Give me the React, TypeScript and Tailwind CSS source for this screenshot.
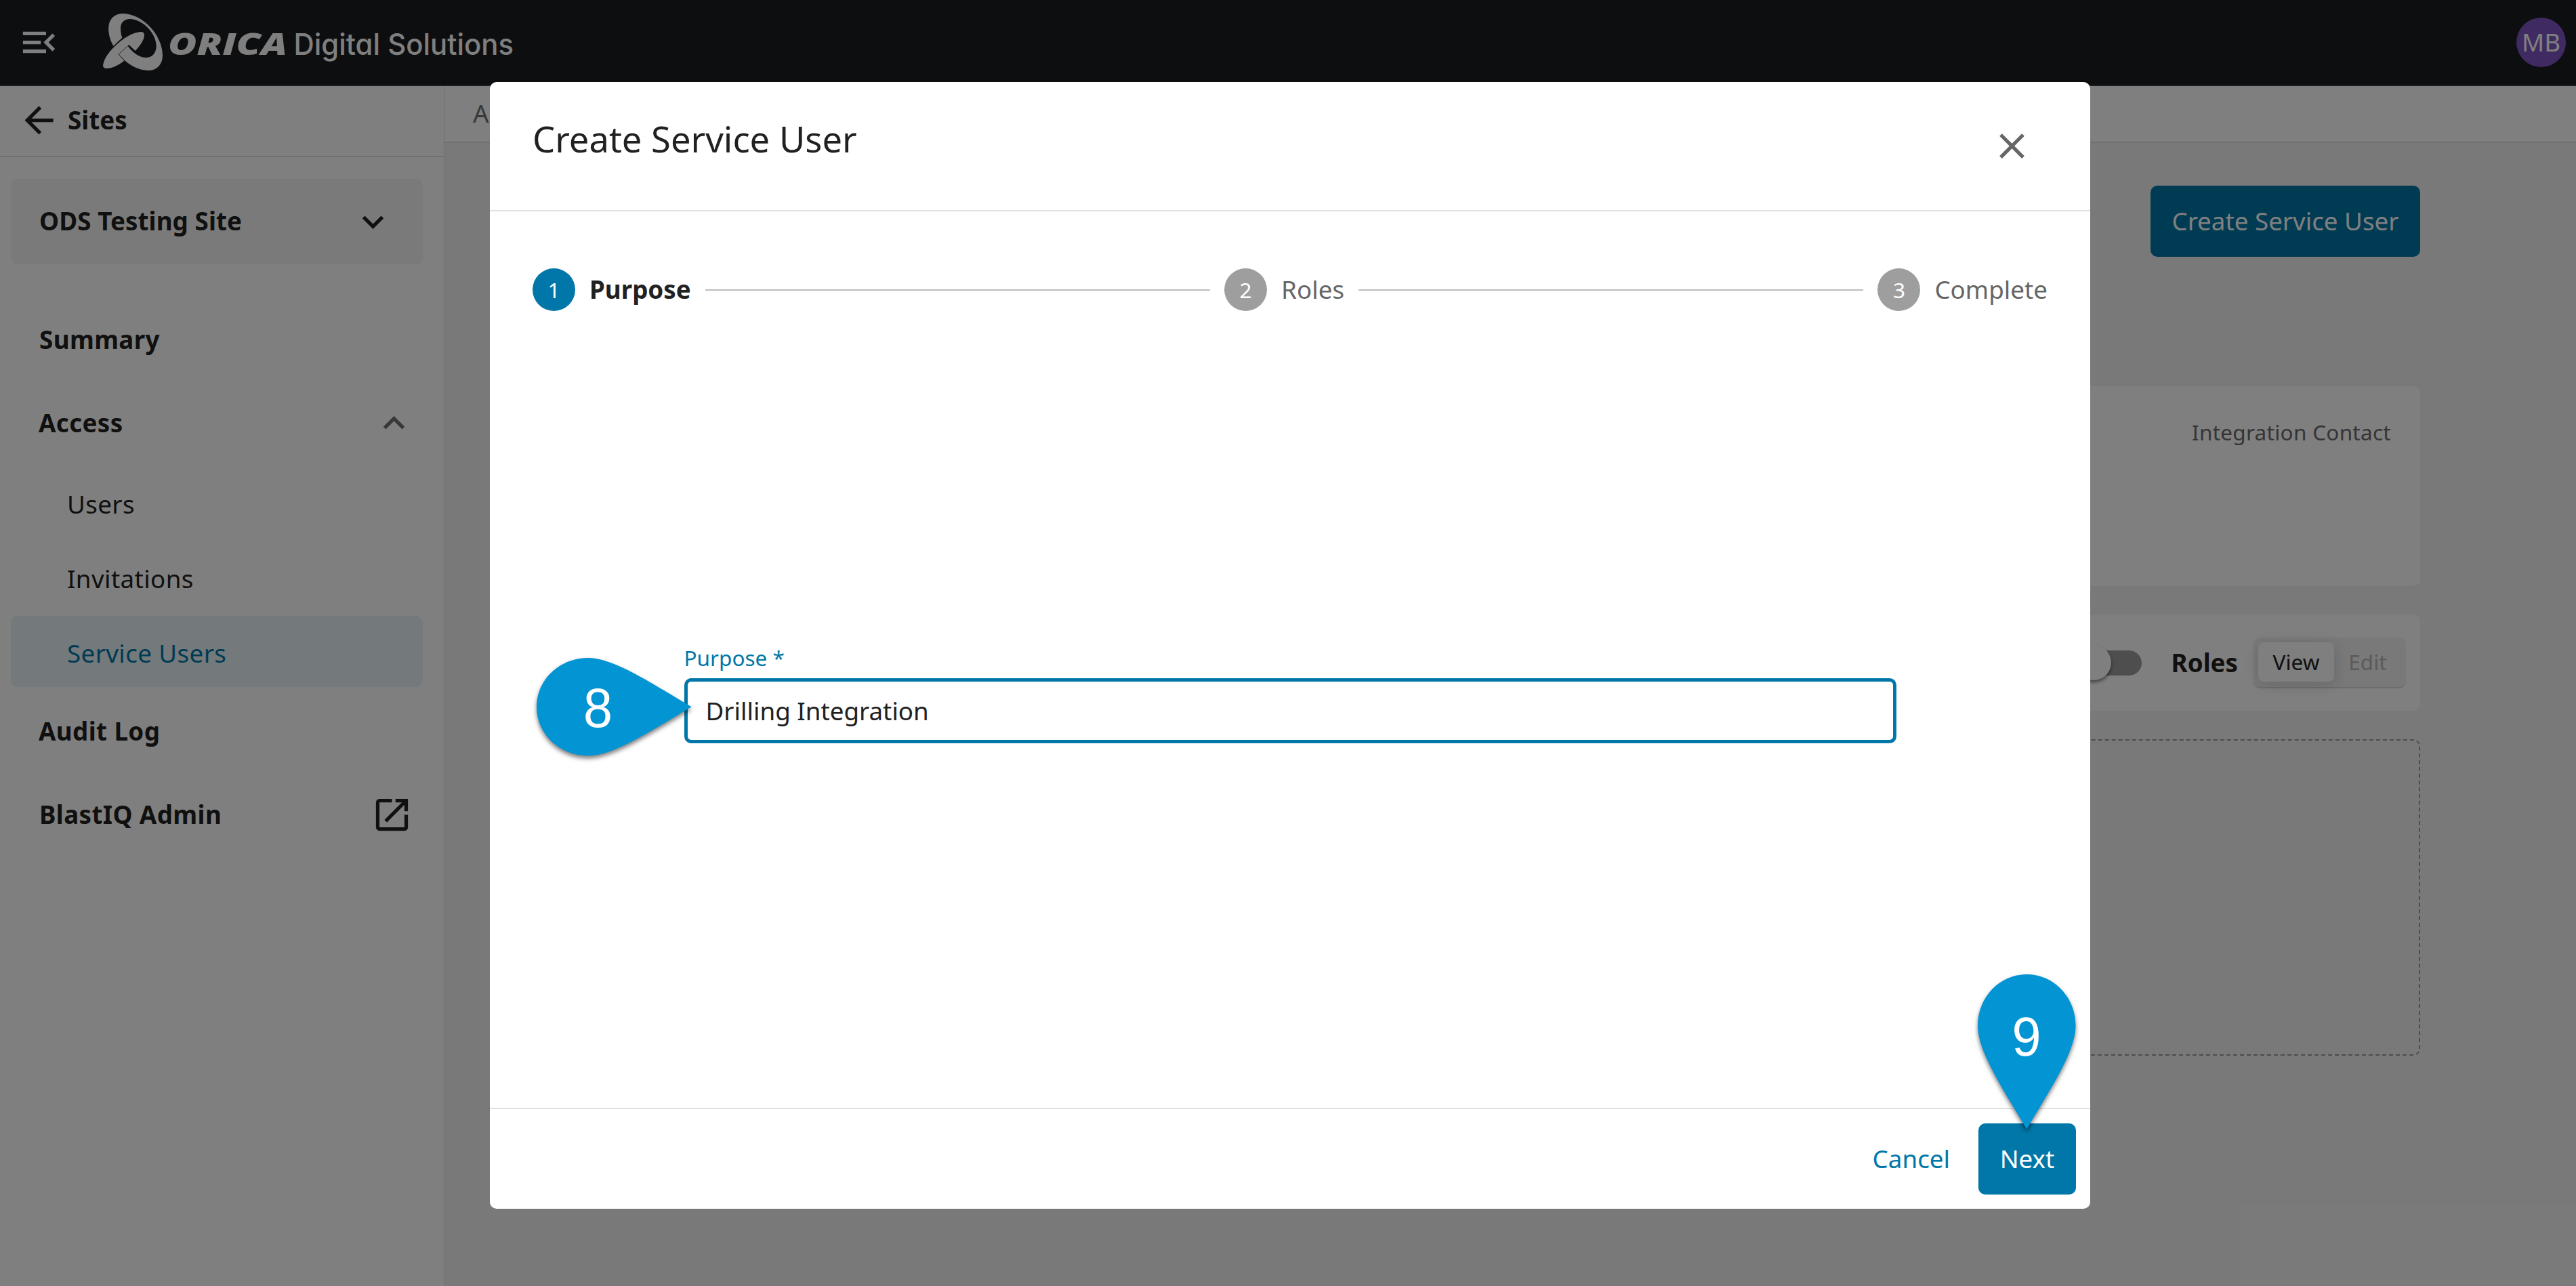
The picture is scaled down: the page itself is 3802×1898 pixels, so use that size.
import React from 'react';
import { MdArrowBack, MdClose, MdExpandLess, MdExpandMore, MdMenuOpen, MdOpenInNew } from 'react-icons/md';

const steps = [
  { id: 1, label: 'Purpose', active: true },
  { id: 2, label: 'Roles', active: false },
  { id: 3, label: 'Complete', active: false },
];

const accessItems = [
  { label: 'Users', selected: false },
  { label: 'Invitations', selected: false },
  { label: 'Service Users', selected: true },
];

const Logo: React.FC = () => (
  <svg width="640" height="110" viewBox="0 0 640 110" fill="#fff" className="shrink-0">
    <g transform="scale(0.33333)">
      <path d="M82 174C66 146 59 115 61 88C64 50 90 30 125 30C215 32 300 128 300 215C299 256 275 282 235 282C195 281 160 262 131 237L106 210L146 174C171 207 200 225 228 225C258 224 273 200 272 170C269 112 208 55 155 54C128 54 112 74 114 98C114 112 117 125 121 137Z" />
      <path d="M202 111C214 110 220 117 219 128C217 147 200 174 179 195L151 169L104 210L130 239C106 258 76 273 52 273C40 272 34 266 37 254C42 228 62 200 87 176C122 141 168 113 202 111Z" />
      <path d="M131 237L105 210L147 173" fill="none" stroke="#1a1c20" strokeWidth="1" />
    </g>
    <text
      x="108"
      y="71"
      fontSize="45"
      textLength="176"
      lengthAdjust="spacingAndGlyphs"
      className="font-['Open_Sans',sans-serif] font-extrabold italic"
    >
      ORICA
    </text>
    <text
      x="293.5"
      y="71"
      fontSize="43.5"
      textLength="324.5"
      lengthAdjust="spacingAndGlyphs"
      className="font-['Inter',sans-serif] font-medium [font-feature-settings:'cv11']"
    >
      Digital Solutions
    </text>
  </svg>
);

const Header: React.FC = () => (
  <header className="flex h-[127px] shrink-0 items-center border-b-2 border-[#38383c] bg-[#1a1c20] pl-[26px] pr-[15px] text-white">
    <MdMenuOpen className="size-[63px]" />
    <div className="ml-[51px] h-[105px]">
      <Logo />
    </div>
    <div className="ml-auto flex size-[73px] items-center justify-center rounded-full bg-[#7e57c2]">MB</div>
  </header>
);

const Sidebar: React.FC = () => (
  <aside className="flex w-[656px] shrink-0 flex-col border-r border-[#e0e0e0] bg-white">
    <div className="flex h-[105px] items-center border-b-2 border-[#e0e0e0] pl-[26px] pb-[3px] font-bold">
      <MdArrowBack className="size-[63px]" />
      <span className="ml-[11px]">Sites</span>
    </div>

    <nav className="flex flex-col pl-4 pr-[31px] tracking-[0.39px]">
      <div className="mt-8 flex h-[126px] items-center justify-between rounded-[10px] bg-[#f4f4f4] pl-[42px] pr-[42px] font-bold tracking-[0.1px]">
        <span className="-mt-0.5">ODS Testing Site</span>
        <MdExpandMore className="size-[63px]" />
      </div>

      <div className="mt-[59px] flex h-[105px] items-center pl-[42px] font-bold">Summary</div>
      <div className="mt-[18px] flex h-[105px] items-center justify-between pl-[41px] pr-[11px] font-bold">
        <span>Access</span>
        <MdExpandLess className="size-[63px] text-[#707070]" />
      </div>

      <div className="mt-3 flex flex-col gap-[5px]">
        {accessItems.map((item) => (
          <div
            key={item.label}
            className={`flex h-[105px] items-center rounded-[10px] pl-[83px] pt-[5px] ${
              item.selected ? 'bg-[#e8f2f6] text-[#0077a8]' : ''
            }`}
          >
            {item.label}
          </div>
        ))}
      </div>

      <div className="mt-[13px] flex h-[105px] items-center pl-[41px] font-bold">Audit Log</div>
      <div className="mt-[18px] flex h-[105px] items-center justify-between pl-[42px] pr-[14px] font-bold">
        <span>BlastIQ Admin</span>
        <MdOpenInNew className="size-[63px]" />
      </div>
    </nav>
  </aside>
);

const Content: React.FC = () => (
  <main className="flex flex-1 flex-col bg-[#f3f3f3]">
    <div className="flex h-[84px] items-center border-b-2 border-[#e0e0e0] bg-white pb-0.5 pl-[42px] text-[#707070]">A</div>

    <div className="flex flex-col pl-[230px] pr-[230px] pt-[63px]">
      <div className="flex justify-end">
        <button className="h-[105px] rounded-[10px] bg-[#0077a8] px-[31.5px] text-white">Create Service User</button>
      </div>

      {/* Contact card */}
      <div className="mt-[191px] flex h-[295px] justify-end rounded-[10px] bg-white pr-[43px] pt-[47px] text-[31.5px] leading-[42px] tracking-[0.27px] text-[#6b6b6b]">
        Integration Contact
      </div>

      {/* Roles toolbar */}
      <div className="mt-[42px] flex h-[142px] items-center justify-end rounded-[10px] bg-white pr-[21px]">
        <div className="relative h-[37px] w-[89px] rounded-full bg-[#9c9c9c]">
          <div className="absolute -left-2 -top-2 size-[52px] rounded-full bg-white shadow-[0_3px_5px_rgba(0,0,0,0.5)]" />
        </div>
        <span className="ml-[44px] font-bold">Roles</span>
        <div className="ml-[23px] flex h-[75px] w-[225px] rounded-[10px] border-b-2 border-[#dadada] bg-[#f3f3f3] p-[7px] text-[31.5px]">
          <div className="flex h-[58px] w-28 items-center justify-center rounded-[8px] bg-white shadow-[0_4px_24px_rgba(0,0,0,0.16)]">
            View
          </div>
          <div className="flex h-[58px] flex-1 items-center justify-center text-[#b6b6b6]">Edit</div>
        </div>
      </div>

      <div className="mt-[42px] h-[467px] rounded-[10px] border-2 border-dashed border-[#9a9a9a]" />
    </div>
  </main>
);

const Stepper: React.FC = () => (
  <div className="flex items-center gap-[21px] pt-[84px]">
    {steps.map((step, i) => (
      <React.Fragment key={step.id}>
        {i > 0 && <div className="mt-px h-[2px] flex-1 bg-[#bdbdbd]" />}
        <div className="flex items-center gap-[21px]">
          <div
            className={`flex size-[63px] items-center justify-center rounded-full text-[31.5px] text-white ${
              step.active ? 'bg-[#0077a8]' : 'bg-[#9e9e9e]'
            }`}
          >
            {step.id}
          </div>
          <span className={step.active ? 'font-bold' : 'text-[#666666]'}>{step.label}</span>
        </div>
      </React.Fragment>
    ))}
  </div>
);

const CreateServiceUserModal: React.FC = () => (
  <div className="absolute inset-0 bg-black/50 pl-[723px] pt-[121px]">
    <div className="flex h-[1663px] w-[2362px] flex-col rounded-[10px] bg-white">
      <div className="flex h-[191px] items-start justify-between border-b-2 border-[#e0e0e0] pl-[63px] pr-[84px] pt-[63px]">
        <h2 className="text-[52.5px] leading-[42px]">Create Service User</h2>
        <MdClose className="size-[63px] text-[#666666]" />
      </div>

      <div className="flex flex-1 flex-col px-[63px]">
        <Stepper />
        <div className="mx-auto mt-[491px] flex w-[1789px] flex-col">
          <label className="text-[31.5px] leading-[42px] text-[#0077a8]">Purpose *</label>
          <div className="mt-[9px] flex h-24 items-center rounded-[10px] border-5 border-[#0077a8] pl-[27px]">
            Drilling Integration
          </div>
        </div>
      </div>

      <div className="flex h-[149px] items-center justify-end gap-[42px] border-t-2 border-[#e0e0e0] pr-[21px]">
        <button className="text-[#0077a8]">Cancel</button>
        <button className="h-[105px] w-36 rounded-[10px] bg-[#0077a8] text-white">Next</button>
      </div>
    </div>
  </div>
);

// Teardrop callouts placed over the dialog
const Callouts: React.FC = () => (
  <>
    <svg
      width="229"
      height="145"
      viewBox="0 0 229 145"
      className="absolute left-[791.5px] top-[971px] overflow-visible drop-shadow-[0_4px_3px_rgba(0,0,0,0.5)]"
    >
      <path d="M76 0C34 0 0 32 0 72.3S34 144.5 76 144.5C112 144.5 162 112 228.5 72.3C162 32.5 112 0 76 0Z" fill="#0394d3" />
      <text
        x="69"
        y="101.5"
        fontSize="81"
        textLength="43"
        lengthAdjust="spacingAndGlyphs"
        fill="#fff"
        className="font-['Liberation_Sans',sans-serif]"
      >
        8
      </text>
    </svg>
    <svg
      width="145"
      height="229"
      viewBox="0 0 145 229"
      className="absolute left-[2918.5px] top-[1438px] overflow-visible drop-shadow-[0_4px_3px_rgba(0,0,0,0.5)]"
    >
      <path d="M0 76C0 34 32 0 72.3 0S144.5 34 144.5 76C144.5 112 112 162 72.3 228.5C32.5 162 0 112 0 76Z" fill="#0394d3" />
      <text
        x="50.5"
        y="120"
        fontSize="81"
        textLength="43"
        lengthAdjust="spacingAndGlyphs"
        fill="#fff"
        className="font-['Liberation_Sans',sans-serif]"
      >
        9
      </text>
    </svg>
  </>
);

export default function App() {
  return (
    <div className="relative flex h-[1898px] w-[3802px] flex-col overflow-hidden bg-white font-['Noto_Sans',sans-serif] text-[36.75px] leading-[55px] text-[#212121]">
      <Header />
      <div className="flex flex-1">
        <Sidebar />
        <Content />
      </div>
      <CreateServiceUserModal />
      <Callouts />
    </div>
  );
}
